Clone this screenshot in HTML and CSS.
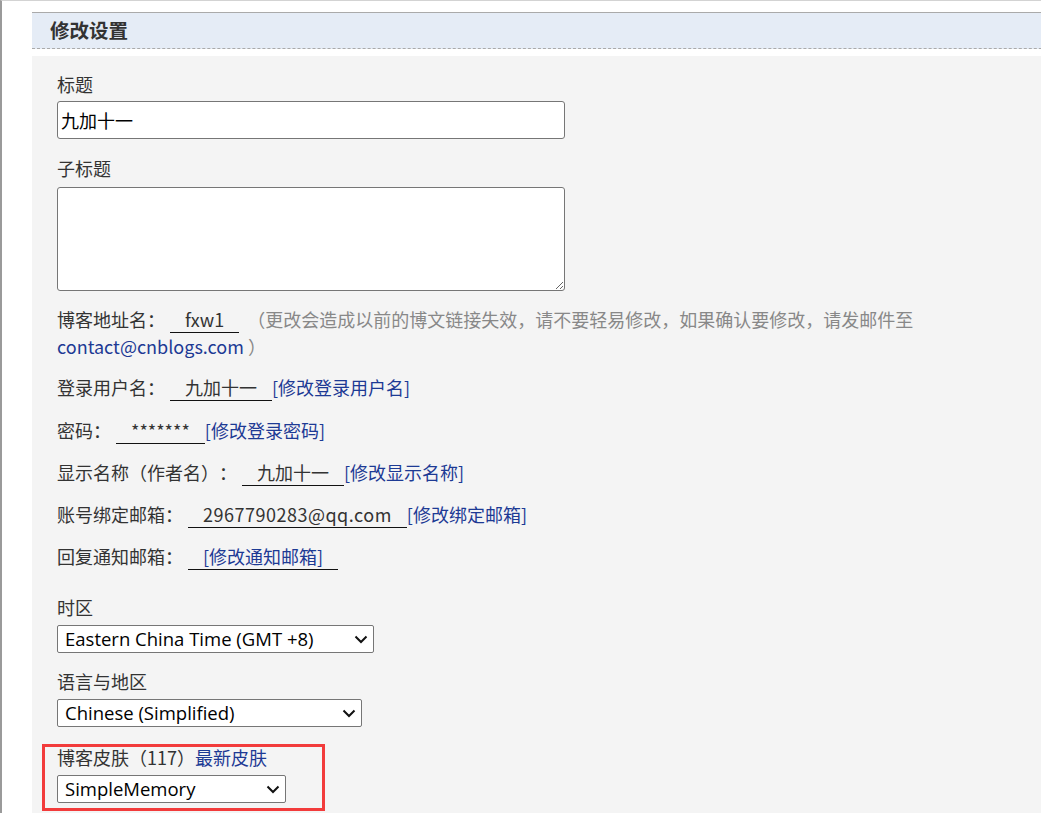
FILE: index.html
```html
<!DOCTYPE html>
<html lang="zh-CN">
<head>
<meta charset="utf-8">
<title>修改设置</title>
<link rel="stylesheet" href="styles.css">
</head>
<body>
<div class="page">
  <div class="panel">
    <div class="panel-head">修改设置</div>
    <div class="panel-body">
      <div class="field f-title">
        <div class="label">标题</div>
        <input class="text-input" type="text" value="九加十一">
      </div>
      <div class="field f-sub">
        <div class="label">子标题</div>
        <textarea class="text-area"></textarea>
      </div>

      <p class="row"><span class="key">博客地址名：</span><span class="val">fxw1</span><span class="note">（更改会造成以前的博文链接失效，请不要轻易修改，如果确认要修改，请发邮件至<br><a class="link" href="#">contact@cnblogs.com</a> ）</span></p>
      <p class="row"><span class="key">登录用户名：</span><span class="val">九加十一</span><a class="link" href="#">[修改登录用户名]</a></p>
      <p class="row"><span class="key">密码：</span><span class="val">*******</span><a class="link" href="#">[修改登录密码]</a></p>
      <p class="row"><span class="key">显示名称（作者名）：</span><span class="val">九加十一</span><a class="link" href="#">[修改显示名称]</a></p>
      <p class="row"><span class="key">账号绑定邮箱：</span><span class="val val-mail">2967790283@qq.com</span><a class="link" href="#">[修改绑定邮箱]</a></p>
      <p class="row"><span class="key">回复通知邮箱：</span><span class="val"><a class="link" href="#">[修改通知邮箱]</a></span></p>

      <div class="field field-select">
        <div class="label">时区</div>
        <div class="select-wrap w-tz">
          <select class="select"><option>Eastern China Time (GMT +8)</option></select>
          <svg class="chev" width="14" height="9" viewBox="0 0 14 9"><path d="M1.5 1.5 L7 7 L12.5 1.5" fill="none" stroke="#111" stroke-width="2"/></svg>
        </div>
      </div>
      <div class="field field-select">
        <div class="label">语言与地区</div>
        <div class="select-wrap w-lang">
          <select class="select"><option>Chinese (Simplified)</option></select>
          <svg class="chev" width="14" height="9" viewBox="0 0 14 9"><path d="M1.5 1.5 L7 7 L12.5 1.5" fill="none" stroke="#111" stroke-width="2"/></svg>
        </div>
      </div>
      <div class="field field-select marked">
        <div class="label">博客皮肤（117）<a class="link" href="#">最新皮肤</a></div>
        <div class="select-wrap w-skin">
          <select class="select"><option>SimpleMemory</option></select>
          <svg class="chev" width="14" height="9" viewBox="0 0 14 9"><path d="M1.5 1.5 L7 7 L12.5 1.5" fill="none" stroke="#111" stroke-width="2"/></svg>
        </div>
      </div>
    </div>
  </div>
</div>
</body>
</html>
```

FILE: styles.css
```css
html, body {
  margin: 0;
  padding: 0;
  background: #fff;
}
body {
  font-family: "Noto Sans CJK SC", "Noto Sans", sans-serif;
  color: #333;
  text-spacing-trim: space-all;
}
.page {
  border-top: 1px solid #d3d3d3;
  border-left: 2px solid #9a9a9a;
  height: 813px;
  padding: 11px 0 0 30px;
  box-sizing: border-box;
  overflow: hidden;
}
.panel {
  width: 1100px;
}
.panel-head {
  border-top: 1px solid #aaa;
  border-bottom: 1px dashed #aaa;
  background: #e5ecf6;
  height: 35px;
  line-height: 34px;
  padding-left: 18px;
  font-size: 19.5px;
  font-weight: bold;
  color: #333;
}
.panel-body {
  margin-top: 7px;
  background: #f4f4f4;
  padding: 15px 0 30px 25px;
  height: 800px;
}
.field {
  margin-bottom: 16px;
}
.label {
  font-size: 18px;
  line-height: 26px;
  height: 26px;
  margin-bottom: 4px;
}
.text-input {
  display: block;
  box-sizing: border-box;
  width: 508px;
  height: 38px;
  border: 1px solid #767676;
  border-radius: 3px;
  padding: 0 3px;
  font-family: "Noto Sans CJK SC", sans-serif;
  font-size: 18px;
  color: #000;
  background: #fff;
  margin: 0;
}
.f-sub {
  margin-bottom: 15px;
}
.text-area {
  display: block;
  box-sizing: border-box;
  width: 508px;
  height: 104px;
  border: 1px solid #767676;
  border-radius: 3px;
  margin: 6px 0 0 0;
  background: #fff;
}
.row {
  margin: 0 0 15.25px 0;
  font-size: 18px;
  line-height: 26px;
  width: 900px;
}
.key {
  margin-right: 5px;
}
.val {
  display: inline-block;
  padding: 0 15px 2px;
  line-height: 22px;
  border-bottom: 1px solid #111;
}
.val-mail {
  letter-spacing: 0.5px;
}
.note {
  color: #888;
  margin-left: 8px;
}
.link {
  color: #1d3a94;
  text-decoration: none;
}
.row + .field-select {
  margin-top: 23.5px;
}
.field-select {
  margin-bottom: 15px;
}
.field-select .label {
  margin-bottom: 5px;
}
.select-wrap {
  position: relative;
  height: 28px;
}
.w-tz { width: 317px; }
.w-lang { width: 305px; }
.w-skin { width: 229px; }
.select {
  appearance: none;
  -webkit-appearance: none;
  box-sizing: border-box;
  width: 100%;
  height: 28px;
  border: 1px solid #767676;
  border-radius: 2px;
  background: #fff;
  font-family: "Open Sans", sans-serif;
  font-size: 18.5px;
  color: #000;
  padding: 0 30px 0 7px;
  margin: 0;
}
.chev {
  position: absolute;
  right: 6px;
  top: 10px;
  pointer-events: none;
}
.marked {
  position: relative;
  width: 229px;
  margin-top: 17px;
}
.marked::after {
  content: "";
  position: absolute;
  box-sizing: border-box;
  left: -15px;
  top: 0;
  width: 283px;
  height: 67px;
  border: 3px solid #f23b3b;
}
```
